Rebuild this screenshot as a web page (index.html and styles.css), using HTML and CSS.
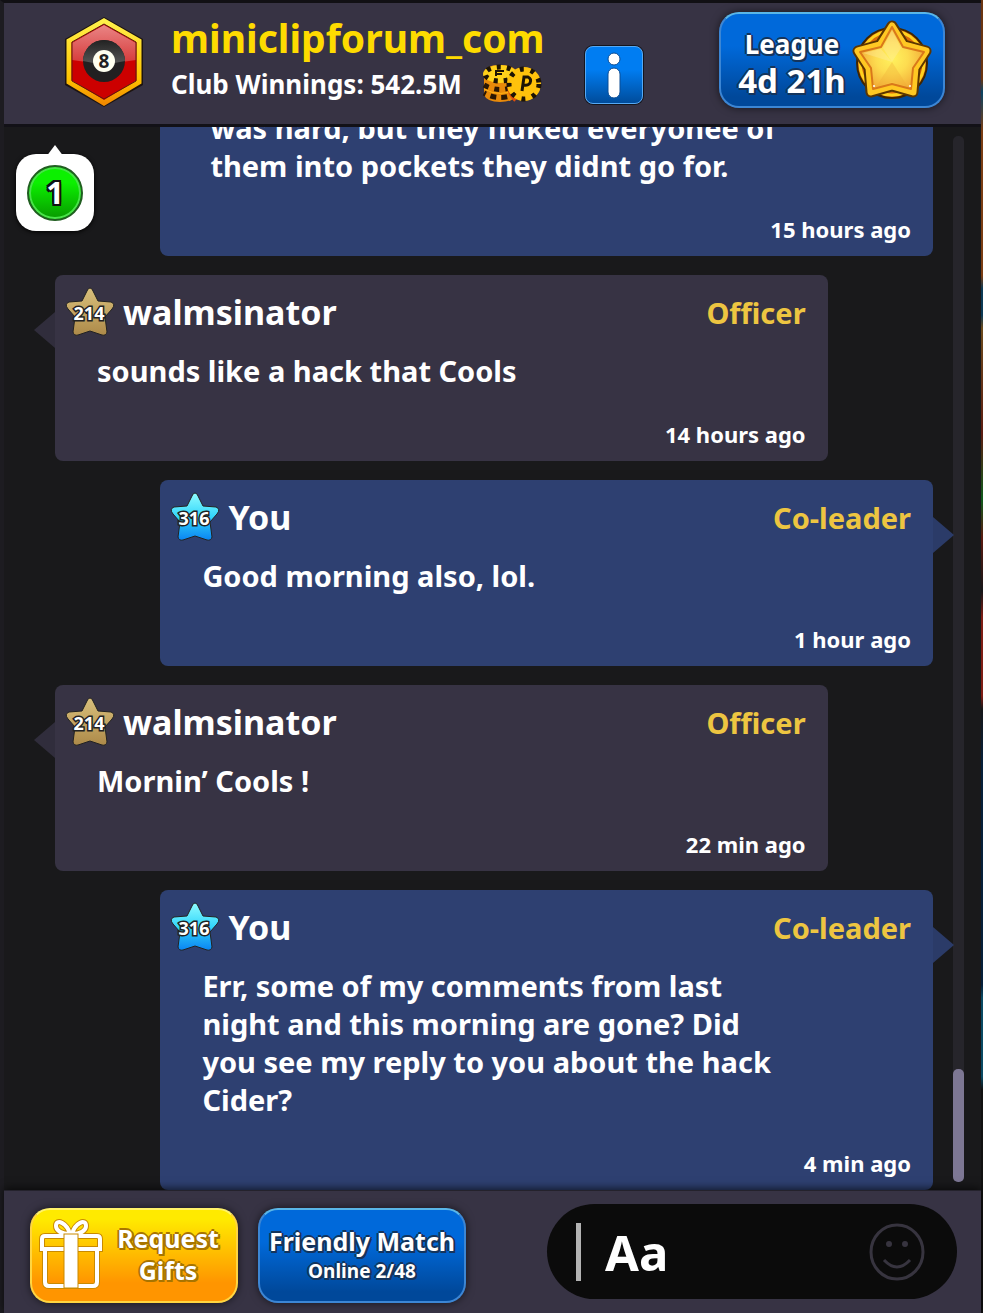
FILE: index.html
```
<!DOCTYPE html>
<html lang="en">
<head>
  <meta charset="utf-8">
  <title>Club Chat</title>
  <link rel="stylesheet" href="styles.css">
</head>
<body>
  <svg class="defs" width="0" height="0" aria-hidden="true">
    <defs>
      <linearGradient id="bronze" x1="0" y1="0" x2="0" y2="1">
        <stop offset="0" stop-color="#d9c07c"/>
        <stop offset="1" stop-color="#ad8a49"/>
      </linearGradient>
      <linearGradient id="cyan" x1="0" y1="0" x2="0" y2="1">
        <stop offset="0" stop-color="#8ffcff"/>
        <stop offset="0.5" stop-color="#33d6fb"/>
        <stop offset="1" stop-color="#0a84f2"/>
      </linearGradient>
      <linearGradient id="gold" x1="0" y1="0" x2="0" y2="1">
        <stop offset="0" stop-color="#fff04a"/>
        <stop offset="0.7" stop-color="#ffc400"/>
        <stop offset="1" stop-color="#f28a00"/>
      </linearGradient>
      <linearGradient id="redTop" x1="0" y1="0" x2="0" y2="1">
        <stop offset="0" stop-color="#ea8585"/>
        <stop offset="1" stop-color="#d63a3a"/>
      </linearGradient>
      <linearGradient id="ballTop" x1="0" y1="0" x2="0" y2="1">
        <stop offset="0" stop-color="#222"/>
        <stop offset="1" stop-color="#555"/>
      </linearGradient>
      <radialGradient id="starGlow">
        <stop offset="0" stop-color="#fff25e"/>
        <stop offset="0.5" stop-color="#fddc50"/>
        <stop offset="1" stop-color="#f3b13a"/>
      </radialGradient>
      <symbol id="star" viewBox="0 0 50 50">
        <path d="M25 1Q27 1 28 4L33 14 46 15Q51 17 47 22L40 30 42 45Q41 49 37 48L25 44 13 48Q9 49 8 45L10 30 3 22Q-1 17 4 15L17 14 22 4Q23 1 25 1z"/>
      </symbol>
    </defs>
  </svg>

  <div class="app">
    <header class="header">
      <svg class="club-logo" viewBox="0 0 80 92" aria-hidden="true">
        <path d="M40 1 79 23V69L40 91 1 69V23z" fill="#1c1412"/>
        <path d="M40 5 75 25V66L40 87 5 66V25z" fill="#cc0000" stroke="url(#gold)" stroke-width="5"/>
        <path d="M40 9 72 27V44Q40 50 8 44V27z" fill="url(#redTop)"/>
        <path d="M40 8 72 26V65L40 83 8 65V26z" fill="none" stroke="#5a1a10"/>
        <circle cx="40" cy="45" r="21" fill="#222021"/>
        <path d="M19 45a21 21 0 0 1 42 0Q40 50 19 45z" fill="url(#ballTop)"/>
        <circle cx="40" cy="45" r="11" fill="#fffff0"/>
        <text class="ball-number" x="40" y="52" text-anchor="middle">8</text>
      </svg>
      <div class="club-info">
        <h1 class="club-name">miniclipforum_com</h1>
        <p class="club-winnings">
          Club Winnings: 542.5M
          <svg class="chips" viewBox="0 0 60 40" aria-hidden="true">
            <path d="M2 10Q2 1 18 1T35 10V31Q31 38 18 38T2 31z" fill="#e88a0a"/>
            <ellipse cx="18" cy="10" rx="17" ry="9" fill="#ffd21a"/>
            <ellipse cx="18" cy="10" rx="15" ry="7" fill="none" stroke="#1d1405" stroke-width="5" stroke-dasharray="4 6"/>
            <path d="M14 12V7h8M14 10h6" fill="none" stroke="#1d1405" stroke-width="2"/>
            <path d="M2 21q16 9 33 0" fill="none" stroke="#2b1703" stroke-width="5" stroke-dasharray="5 6"/>
            <path d="M2 29q16 9 33 0" fill="none" stroke="#2b1703" stroke-width="5" stroke-dasharray="6 5" stroke-dashoffset="4"/>
            <path d="M2 25q16 9 33 0" fill="none" stroke="#ffb515" stroke-width="1"/>
            <path d="M28 18q-2 10 6 18" fill="none" stroke="#e2500a" stroke-width="5"/>
            <circle cx="42" cy="20" r="17" fill="#ffc20c"/>
            <circle cx="42" cy="20" r="15" fill="none" stroke="#1d1405" stroke-width="5" stroke-dasharray="4 7"/>
            <circle cx="42" cy="20" r="10" fill="#ffc20c"/>
            <path d="M40 27 42 13l4 0q4 2 2 6-2 3-7 2" fill="none" stroke="#1d1405" stroke-width="3"/>
          </svg>
        </p>
      </div>
      <button class="info-button" type="button" aria-label="Club information">
        <svg viewBox="0 0 56 56" aria-hidden="true">
          <circle cx="28" cy="12" r="6"/>
          <rect x="22" y="21" width="12" height="30" rx="6"/>
        </svg>
      </button>
      <button class="game-button league-button" type="button">
        <span class="button-text league-text">
          <span class="league-label">League</span>
          <span class="league-time">4d 21h</span>
        </span>
        <svg class="league-star" viewBox="0 0 80 80" aria-hidden="true">
          <circle cx="40" cy="43" r="35" fill="#d96a08" stroke="#402600" stroke-width="2"/>
          <circle cx="40" cy="43" r="32" fill="none" stroke="#ffd21f" stroke-width="3"/>
          <path d="M40 6 52 25 74 31 63 48 61 72 40 66 19 72 17 48 6 31 28 25z" fill="#5c3600" stroke="#5c3600" stroke-width="11" stroke-linejoin="round"/>
          <path d="M40 6 52 25 74 31 63 48 61 72 40 66 19 72 17 48 6 31 28 25z" fill="#e07c12" stroke="#ffc823" stroke-width="7" stroke-linejoin="round"/>
          <path d="M40 7 51 27 72 32 61 48 59 69 40 64 21 69 19 48 8 32 29 27z" fill="url(#starGlow)" stroke="#d9781a" stroke-width="2" stroke-linejoin="round"/>
          <path d="M40 10 49 28 40 42 31 28zM11 33 29 29 40 42z" fill="#ffeaa0" opacity="0.4"/>
          <path d="M40 42 56 67 40 62 24 67z" fill="#eda935" opacity="0.3"/>
          <circle cx="22" cy="66" r="1" fill="#fff"/>
          <circle cx="58" cy="66" r="1" fill="#fff"/>
        </svg>
      </button>
    </header>

    <main class="chat">
      <div class="unread" aria-label="1 unread message"><span class="unread-count">1</span></div>

      <div class="messages">
        <article class="message own">
          <p class="message-text continued">was hard, but they fluked everyonee of them into pockets they didnt go for.</p>
          <time class="message-time">15 hours ago</time>
        </article>

        <article class="message tail">
          <div class="message-header">
            <svg class="level bronze" viewBox="0 0 50 50"><use href="#star"/><text x="24" y="33" text-anchor="middle">214</text></svg>
            <h2 class="author">walmsinator</h2>
            <span class="role">Officer</span>
          </div>
          <p class="message-text">sounds like a hack that Cools</p>
          <time class="message-time">14 hours ago</time>
        </article>

        <article class="message own tail">
          <div class="message-header">
            <svg class="level cyan" viewBox="0 0 50 50"><use href="#star"/><text x="24" y="33" text-anchor="middle">316</text></svg>
            <h2 class="author">You</h2>
            <span class="role">Co-leader</span>
          </div>
          <p class="message-text">Good morning also, lol.</p>
          <time class="message-time">1 hour ago</time>
        </article>

        <article class="message tail">
          <div class="message-header">
            <svg class="level bronze" viewBox="0 0 50 50"><use href="#star"/><text x="24" y="33" text-anchor="middle">214</text></svg>
            <h2 class="author">walmsinator</h2>
            <span class="role">Officer</span>
          </div>
          <p class="message-text">Mornin’ Cools !</p>
          <time class="message-time">22 min ago</time>
        </article>

        <article class="message own tail">
          <div class="message-header">
            <svg class="level cyan" viewBox="0 0 50 50"><use href="#star"/><text x="24" y="33" text-anchor="middle">316</text></svg>
            <h2 class="author">You</h2>
            <span class="role">Co-leader</span>
          </div>
          <p class="message-text">Err, some of my comments from last night and this morning are gone? Did you see my reply to you about the hack Cider?</p>
          <time class="message-time">4 min ago</time>
        </article>
      </div>

      <div class="scroll-track"><div class="scroll-thumb"></div></div>
    </main>

    <footer class="footer">
      <button class="game-button gift-button" type="button">
        <svg class="gift-icon" viewBox="0 0 64 72" aria-hidden="true">
          <g class="gift-shadow">
            <path d="M31 16C28 5 17 0 17 8c0 5 6 8 14 8zM33 16C36 5 47 0 47 8c0 5-6 8-14 8z"/>
            <path d="M3 21q0-3 3-3h52q3 0 3 3v10H3zM6 31v33q0 4 4 4h44q4 0 4-4V31"/>
          </g>
          <g class="gift-lines">
            <path d="M31 16C28 5 17 0 17 8c0 5 6 8 14 8zM33 16C36 5 47 0 47 8c0 5-6 8-14 8z"/>
            <path d="M3 21q0-3 3-3h52q3 0 3 3v10H3zM6 31v33q0 4 4 4h44q4 0 4-4V31"/>
          </g>
          <rect x="25" y="16" width="14" height="54" fill="#fff" stroke="#c98a00"/>
        </svg>
        <span class="button-text gift-label"><span>Request</span><span>Gifts</span></span>
      </button>
      <button class="game-button match-button" type="button">
        <span class="button-text">
          <span class="match-label">Friendly Match</span>
          <span class="match-online">Online 2/48</span>
        </span>
      </button>
      <div class="composer">
        <input class="composer-input" type="text" placeholder="Aa" aria-label="Message">
        <button class="emoji-button" type="button" aria-label="Emoji">
          <svg viewBox="0 0 56 58" aria-hidden="true">
            <ellipse cx="28" cy="29" rx="26" ry="27"/>
            <path d="M15 37q13 14 26 0"/>
            <circle class="eye" cx="20" cy="21" r="3"/>
            <circle class="eye" cx="36" cy="21" r="3"/>
          </svg>
        </button>
      </div>
    </footer>
  </div>
</body>
</html>
```
FILE: styles.css
```
:root {
  --panel: #373344;
  --own: #2e4071;
  --chat-bg: #19191b;
  --role: #edc541;
  --outline: #14345c;
}

* {
  box-sizing: border-box;
}

/* The game table shows through in a thin strip at the right edge */
body {
  margin: 0;
  padding-right: 2px;
  background: linear-gradient(#6b3510 6%, #0b4463 7%, #7a3d12 10%, #7a3d12 21%, #0c3a55 22%, #0c3a55 24%, #6b4a1c 25%, #5c1d12 33%, #0f5a1c 38%, #5a1a10 41%, #161618 45%, #7e1d14 47%, #7e1d14 53%, #161618 54%, #06203a 58%, #06203a 75%, #0a4a63 76%, #0a4a63 82%, #111 83%);
  color: #fff;
  font-family: "Noto Sans", "Open Sans", sans-serif;
  font-weight: 700;
}

h1, h2, p {
  margin: 0;
}

button {
  font: inherit;
  color: inherit;
  padding: 0;
  border: none;
  cursor: pointer;
}

.defs {
  position: absolute;
}

.app {
  display: flex;
  flex-direction: column;
  height: 100vh;
  border-top: 3px solid #111014;
  border-left: 4px solid #1d1c21;
  background: var(--chat-bg);
}

/* Header */

.header {
  display: flex;
  align-items: center;
  flex: none;
  height: 124px;
  padding: 0 36px 4px 60px;
  background: var(--panel);
  border-bottom: 3px solid #121117;
}

.club-logo {
  flex: none;
  width: 80px;
  height: 92px;
  margin-right: 27px;
}

.ball-number {
  font-size: 19px;
  fill: #222;
}

.club-info {
  flex: 1;
  margin-bottom: 4px;
}

.club-name {
  padding-bottom: 4px;
  font-size: 39px;
  line-height: 44px;
  color: #fedb00;
}

.club-winnings {
  display: flex;
  align-items: center;
  gap: 20px;
  height: 40px;
  font-size: 26px;
}

.chips {
  width: 60px;
  height: 40px;
}

.info-button {
  flex: none;
  width: 58px;
  height: 58px;
  margin: 26px 76px 0 0;
  border: 1px solid #55a9f5;
  border-radius: 8px;
  background: linear-gradient(#007df2 40%, #004c9b);
  box-shadow: 0 0 0 1px #15151c;
}

.info-button svg {
  display: block;
  fill: #fff;
  stroke: #0b4c94;
  stroke-width: 1;
}

.game-button {
  display: flex;
  align-items: center;
  justify-content: center;
  flex: none;
  height: 96px;
  border: 2px solid #3c86d4;
  border-top-color: #59b6e8;
  border-radius: 20px;
  background: linear-gradient(#0069da 35%, #00489a 90%);
  box-shadow: 0 0 8px rgba(0, 0, 0, 0.6);
  white-space: nowrap;
}

.button-text {
  display: flex;
  flex-direction: column;
  align-items: center;
  text-shadow: 2px 0 var(--outline), -2px 0 var(--outline), 0 2px var(--outline), 0 -2px var(--outline), 2px 2px var(--outline);
}

.league-button {
  width: 226px;
  gap: 6px;
  margin-bottom: 4px;
  padding-left: 6px;
}

.league-text {
  padding-top: 8px;
}

.league-label {
  font-size: 26px;
  line-height: 34px;
}

.league-time {
  font-size: 33px;
  line-height: 40px;
}

.league-star {
  width: 80px;
  height: 80px;
}

/* Chat */

.chat {
  position: relative;
  display: flex;
  flex: 1;
  min-height: 0;
  padding-right: 17px;
  overflow: hidden;
}

.messages {
  display: flex;
  flex-direction: column;
  justify-content: flex-end;
  flex: 1;
  gap: 19px;
  padding: 0 20px 0 51px;
}

.message {
  position: relative;
  display: flex;
  flex-direction: column;
  flex: none;
  align-self: flex-start;
  width: 88%;
  padding: 7px 22px 11px 10px;
  border-radius: 8px;
  background: var(--panel);
}

.message.own {
  align-self: flex-end;
  background: var(--own);
}

/* Speech bubble pointer */
.message.tail::before {
  content: "";
  position: absolute;
  top: 37px;
  left: -21px;
  width: 21px;
  height: 36px;
  background: #302d3c;
  clip-path: polygon(100% 0, 100% 100%, 0 50%);
}

.message.own.tail::before {
  left: auto;
  right: -21px;
  background: #2b3b68;
  clip-path: polygon(0 0, 100% 50%, 0 100%);
}

.message-header {
  display: flex;
  align-items: center;
  height: 60px;
}

.level {
  width: 50px;
  height: 50px;
  margin-right: 8px;
  stroke: #222;
  stroke-width: 1;
}

.level text {
  font-size: 18px;
  fill: #fff;
  stroke: #222;
  stroke-width: 3px;
  paint-order: stroke;
}

.bronze {
  fill: url(#bronze);
}

.cyan {
  fill: url(#cyan);
}

.author {
  flex: 1;
  font-size: 34px;
  line-height: 40px;
}

.role {
  font-size: 29px;
  color: var(--role);
}

.message-text {
  max-width: 624px;
  padding: 10px 0 0 32px;
  font-size: 29px;
  line-height: 38px;
}

.message-text.continued {
  padding-left: 40px;
}

.message-time {
  margin-top: 28px;
  align-self: flex-end;
  font-size: 22px;
  line-height: 32px;
}

.unread {
  position: absolute;
  top: 27px;
  left: 12px;
  z-index: 1;
  display: flex;
  align-items: center;
  justify-content: center;
  width: 78px;
  height: 77px;
  border-radius: 20px;
  background: #fff;
  box-shadow: 0 1px 4px #000;
}

.unread::before {
  content: "";
  position: absolute;
  top: -9px;
  left: 30px;
  width: 18px;
  height: 12px;
  background: #fff;
  clip-path: polygon(50% 0, 100% 100%, 0 100%);
}

.unread-count {
  width: 56px;
  height: 56px;
  border: 2px solid #205e20;
  border-radius: 50%;
  background: linear-gradient(#0cf000 30%, #079900);
  box-shadow: inset 0 0 0 2px #49e249;
  font-size: 31px;
  line-height: 50px;
  text-align: center;
  text-shadow: 2px 0 #111, -2px 0 #111, 0 2px #111, 0 -2px #111, 2px 2px #111, -2px -2px #111, 2px -2px #111, -2px 2px #111;
}

.scroll-track {
  display: flex;
  flex-direction: column;
  justify-content: flex-end;
  width: 11px;
  margin: 9px 0 8px;
  border-radius: 5px;
  background: #26252b;
}

.scroll-thumb {
  height: 113px;
  border-radius: 5px;
  background: #7d7794;
}

/* Footer */

.footer {
  display: flex;
  align-items: flex-start;
  flex: none;
  height: 123px;
  gap: 20px;
  padding: 13px 24px 0 26px;
  background: var(--panel);
  border-top: 1px solid #24222c;
  box-shadow: 0 -2px 8px rgba(0, 0, 0, 0.6);
  z-index: 1;
}

.footer .game-button {
  width: 208px;
  height: 95px;
  margin-top: 4px;
  padding-bottom: 4px;
}

.gift-button {
  --outline: #a87400;
  gap: 14px;
  padding-right: 10px;
  border-color: #ffd541;
  border-top-color: #fff26a;
  background: linear-gradient(#ffea00 10%, #ff9500 80%);
}

.gift-icon {
  width: 64px;
  height: 72px;
}

.gift-shadow,
.gift-lines {
  fill: none;
  stroke: #c98a00;
  stroke-width: 6;
}

.gift-lines {
  stroke: #fff;
  stroke-width: 4;
}

.gift-label {
  font-size: 25px;
  line-height: 32px;
}

.match-label {
  font-size: 25px;
  line-height: 34px;
}

.match-online {
  font-size: 19px;
  line-height: 26px;
}

.composer {
  display: flex;
  align-items: center;
  flex: 1;
  min-width: 0;
  height: 95px;
  margin-left: 61px;
  padding: 0 32px 0 29px;
  border-radius: 48px;
  background: #0b0b0b;
}

.composer-input {
  flex: 1;
  min-width: 0;
  height: 58px;
  padding: 0 0 0 24px;
  border: none;
  border-left: 5px solid #b3b3b3;
  outline: none;
  background: none;
  color: #fff;
  font: inherit;
  font-size: 49px;
}

.composer-input::placeholder {
  color: #fff;
  opacity: 1;
}

.emoji-button {
  flex: none;
  width: 56px;
  height: 58px;
  background: none;
}

.emoji-button svg {
  display: block;
  fill: none;
  stroke: #37343f;
  stroke-width: 3;
}

.emoji-button .eye {
  fill: #37343f;
  stroke: none;
}
```
